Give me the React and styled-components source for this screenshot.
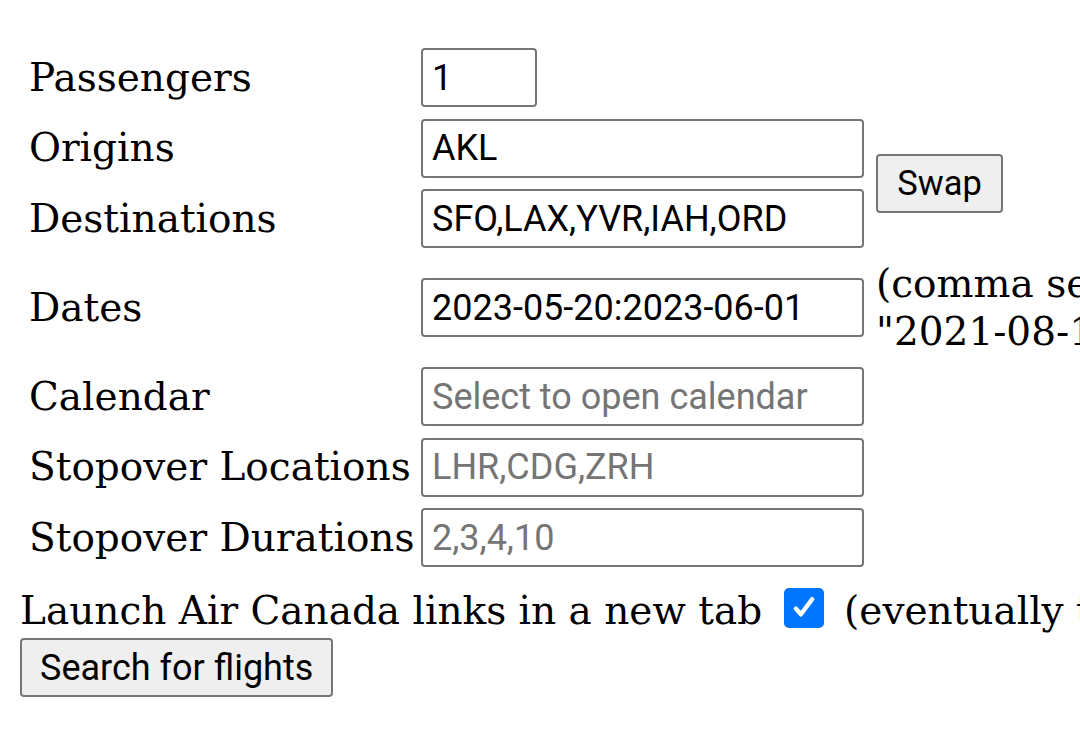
import React from 'react';
import styled, { createGlobalStyle } from 'styled-components';

const GlobalStyle = createGlobalStyle`
  html, body {
    margin: 0;
    padding: 0;
    background: #fff;
    overflow: hidden;
  }
  body {
    font-family: 'DejaVu Serif', serif;
    color: #000;
  }
`;

const Page = styled.div`
  padding: 48px 0 0 20px;
  width: 1600px;
  font-size: 39px;
  line-height: 48px;
`;

const FormGrid = styled.div`
  display: grid;
  grid-template-columns: 383px 443px 700px;
  column-gap: 12px;
  row-gap: 11.5px;
  align-items: center;
  margin-left: 6px;
`;

const Label = styled.div`
  white-space: nowrap;
  grid-column: 1;
  padding-left: 3px;
`;

const TextInput = styled.input`
  grid-column: 2;
  box-sizing: border-box;
  width: ${(p) => (p.$narrow ? '116px' : '443px')};
  height: 59px;
  margin: 0;
  padding: 0 9px;
  border: 2px solid #767676;
  border-radius: 4px;
  font-family: Roboto, 'Noto Sans', sans-serif;
  font-size: 36px;
  color: #000;
  background: #fff;
  &::placeholder {
    color: #757575;
  }
`;

const Note = styled.div`
  grid-column: 3;
  white-space: nowrap;
`;

const Button = styled.button`
  box-sizing: border-box;
  height: 59px;
  padding: 0 18px;
  border: 2px solid #767676;
  border-radius: 4px;
  background: #efefef;
  font-family: Roboto, 'Noto Sans', sans-serif;
  font-size: 36px;
  color: #000;
`;

const SwapButton = styled(Button)`
  grid-column: 3;
  grid-row: 2 / span 2;
  justify-self: start;
  width: 127px;
  padding: 0;
  font-size: 34.5px;
`;

const CheckRow = styled.div`
  margin-top: 20px;
  display: flex;
  align-items: center;
  white-space: nowrap;
`;

const Check = styled.span`
  display: inline-flex;
  align-items: center;
  justify-content: center;
  width: 40px;
  height: 40px;
  margin: -6px 20px 0 22px;
  border-radius: 5px;
  background: #0075ff;
`;

const SearchRow = styled.div`
  margin-top: 3px;
`;

export default function App() {
  return (
    <>
      <GlobalStyle />
      <Page>
        <FormGrid>
          <Label>Passengers</Label>
          <TextInput $narrow defaultValue="1" />
          <Note />

          <Label>Origins</Label>
          <TextInput defaultValue="AKL" />
          <SwapButton>Swap</SwapButton>

          <Label>Destinations</Label>
          <TextInput defaultValue="SFO,LAX,YVR,IAH,ORD" />

          <Label>Dates</Label>
          <TextInput defaultValue="2023-05-20:2023-06-01" />
          <Note>
            (comma separated dates or ranges, e.g.
            <br />
            "2021-08-15,2021-08-20:2021-08-25")
          </Note>

          <Label>Calendar</Label>
          <TextInput placeholder="Select to open calendar" />
          <Note />

          <Label>Stopover Locations</Label>
          <TextInput placeholder="LHR,CDG,ZRH" />
          <Note />

          <Label>Stopover Durations</Label>
          <TextInput placeholder="2,3,4,10" />
          <Note />
        </FormGrid>
        <CheckRow>
          Launch Air Canada links in a new tab
          <Check>
            <svg width="30" height="30" viewBox="0 0 24 24" fill="none">
              <path d="M5.5 12.5l4 4.5L18.5 5" stroke="#fff" strokeWidth="3.6" strokeLinecap="round" strokeLinejoin="round" />
            </svg>
          </Check>
          (eventually this will be the default)
        </CheckRow>
        <SearchRow>
          <Button>Search for flights</Button>
        </SearchRow>
      </Page>
    </>
  );
}
